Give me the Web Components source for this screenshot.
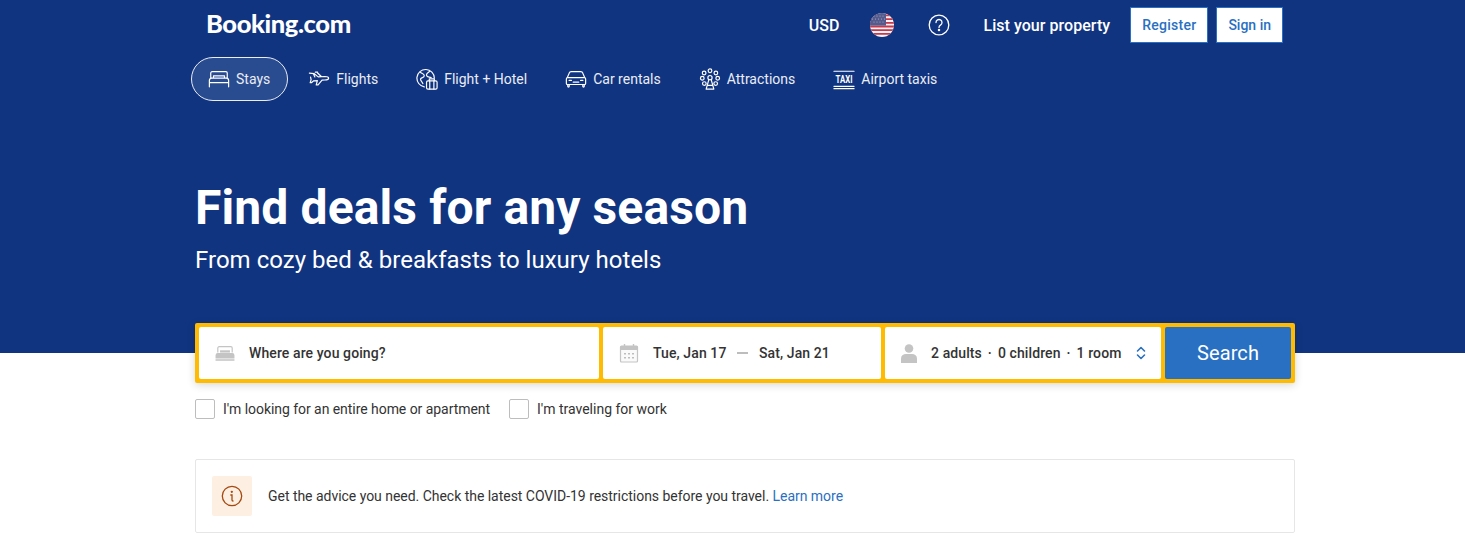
<!DOCTYPE html>
<html lang="en">
<head>
<meta charset="utf-8">
<title>Booking.com</title>
<style>
    html, body { margin: 0; background: #fff; }
    body { font-family: Roboto, "Liberation Sans", sans-serif; color: #333; overflow: hidden; }
    main { display: block; padding-left: 195px; }
</style>
</head>
<body>
<bk-hero>
    <bk-topbar></bk-topbar>
    <bk-tabs>
        <bk-tab icon="bed" active>Stays</bk-tab>
        <bk-tab icon="plane">Flights</bk-tab>
        <bk-tab icon="combo">Flight + Hotel</bk-tab>
        <bk-tab icon="car">Car rentals</bk-tab>
        <bk-tab icon="wheel">Attractions</bk-tab>
        <bk-tab icon="taxi">Airport taxis</bk-tab>
    </bk-tabs>
    <h1 slot="title">Find deals for any season</h1>
    <span slot="subtitle">From cozy bed &amp; breakfasts to luxury hotels</span>
</bk-hero>
<main>
    <bk-search></bk-search>
    <bk-options>
        <bk-check style="letter-spacing:-.05px">I'm looking for an entire home or apartment</bk-check>
        <bk-check>I'm traveling for work</bk-check>
    </bk-options>
    <bk-notice>Get the advice you need. Check the latest COVID-19 restrictions before you travel. <a slot="link">Learn more</a></bk-notice>
</main>

<script>
const ICONS = {
    bed: `<path d="M3 11V5.500A1.500 1.500 0 0 1 4.500 4h15A1.500 1.500 0 0 1 21 5.500V11M1.500 19v-5.500A2.500 2.500 0 0 1 4 11h16a2.500 2.500 0 0 1 2.500 2.500V19M1.500 16h21M1.500 19v1.500M22.500 19v1.500M6 11V8.500h12V11"/>`,
    plane: `<path d="M1.500 5.500l5 .6 4.600 3.600 7.400-.4c2.200 0 4 .8 4 1.800s-1.800 1.900-4 2l-3.200.2-4.300 5.200H9l1.200-4.700-4 .2-2.500 2H2.400l1-3.400-.6-2.600M7.500 9.700l-1.700-3.600M10.500 5.500l4 3.800M8 4.500h2.500"/>`,
    combo: `<path d="M9 20.500a9.500 9.500 0 1 1 11-9.500M5 5c2 1.500 4 1 4 3.500S5.500 10 5 12s2 3 2.500 5M15 3c-1 2.500-4 2.500-3.500 5s3 1.500 5 2.500"/><rect x="11.500" y="14" width="11.500" height="9" rx="1.500"/><path d="M14.500 14v-2.200h5.500V14M15 14v9M19.500 14v9"/>`,
    car: `<path d="M2.500 10.500l2-4.800A2.500 2.500 0 0 1 6.800 4h10.400a2.500 2.500 0 0 1 2.300 1.700l2 4.800M2.500 10.500h19a1.500 1.500 0 0 1 1 1.400v5.100a1 1 0 0 1-1 1h-19a1 1 0 0 1-1-1v-5.100a1.500 1.500 0 0 1 1-1.400zM3 18v2a.8.8 0 0 0 1.600 0v-2M19.400 18v2a.8.8 0 0 0 1.600 0v-2M4.500 13.500H7M17 13.500h2.500M9 15.500h6"/>`,
    wheel: `<circle cx="12" cy="3" r="2"/><circle cx="5.600" cy="5.400" r="2"/><circle cx="18.400" cy="5.400" r="2"/><circle cx="3.600" cy="11.200" r="2"/><circle cx="20.400" cy="11.200" r="2"/><circle cx="5.800" cy="17" r="2"/><circle cx="18.200" cy="17" r="2"/><circle cx="12" cy="10.500" r="2.300"/><path d="M10.800 12.500L7.800 23h8.400l-3-10.500M9.500 19h5"/>`,
    taxi: `<path d="M1 3.500h22M1 20h22M1 22.500h22" stroke-width="1.200"/><text transform="translate(12 16.800) scale(.95 1.300)" text-anchor="middle" font-family="Roboto, sans-serif" font-size="9" font-weight="700" fill="#fff" stroke="none">TAXI</text>`,
};

customElements.define('bk-hero', class extends HTMLElement {
    constructor() {
        super();
        this.attachShadow({ mode: 'open' }).innerHTML = `
            <style>
                :host { display: block; background: #113480; color: #fff; height: 353px; padding-left: 195px; }
                .wrap { width: 1100px; }
                .text { padding-top: 77px; }
                ::slotted(h1) { margin: 0; font-size: 48px; line-height: 60px; font-weight: 700; color: #fff; letter-spacing: .12px; }
                .sub { font-size: 24px; line-height: 32px; margin-top: 6px; display: block; letter-spacing: .02px; }
            </style>
            <div class="wrap">
                <slot name="top"></slot>
                <slot></slot>
                <div class="text">
                    <slot name="title"></slot>
                    <span class="sub"><slot name="subtitle"></slot></span>
                </div>
            </div>
        `;
    }
});

customElements.define('bk-topbar', class extends HTMLElement {
    constructor() {
        super();
        this.attachShadow({ mode: 'open' }).innerHTML = `
            <style>
                :host { display: flex; align-items: center; height: 50px; padding: 0 12px; color: #fff; }
                .logo { font-family: Lato, Roboto, sans-serif; font-weight: 900; font-size: 25.500px; line-height: 50px; letter-spacing: -0.4px; position: relative; top: -2px; margin-left: -1px; flex: none; }
                .right { margin-left: auto; display: flex; align-items: center; font-size: 16px; font-weight: 500; }
                .usd { margin-right: 31px; }
                .flag { display: block; margin-right: 34px; }
                .help { display: block; margin-right: 33px; }
                .list { margin-right: 20px; letter-spacing: .05px; }
                .btn { box-sizing: border-box; height: 36px; background: #fff; border: 1px solid #2a70c2; color: #2a70c2; font-size: 14px; font-weight: 500; display: flex; align-items: center; padding: 0 11px; }
                .btn.wide { letter-spacing: .25px; }
                .btn + .btn { margin-left: 8px; }
            </style>
            <span class="logo">Booking.com</span>
            <div class="right">
                <span class="usd">USD</span>
                <svg class="flag" width="24" height="24" viewBox="0 0 24 24">
                    <defs><clipPath id="c"><circle cx="12" cy="12" r="12"/></clipPath></defs>
                    <g clip-path="url(#c)">
                        <rect width="24" height="24" fill="#f4f4f6"/>
                        <path d="M0 1.500h24v1.800H0zM0 5.200h24V7H0zM0 8.900h24v1.800H0zM0 12.600h24v1.800H0zM0 16.300h24v1.800H0zM0 20h24v1.800H0z" fill="#c8374a"/>
                        <rect width="16" height="12.600" fill="#555b8c"/>
                        <g fill="#aab0cf">
                            <circle cx="4" cy="3" r=".6"/><circle cx="7" cy="3" r=".6"/><circle cx="10" cy="3" r=".6"/><circle cx="13" cy="3" r=".6"/>
                            <circle cx="2.500" cy="6" r=".6"/><circle cx="5.500" cy="6" r=".6"/><circle cx="8.500" cy="6" r=".6"/><circle cx="11.500" cy="6" r=".6"/><circle cx="14.500" cy="6" r=".6"/>
                            <circle cx="4" cy="9" r=".6"/><circle cx="7" cy="9" r=".6"/><circle cx="10" cy="9" r=".6"/><circle cx="13" cy="9" r=".6"/>
                        </g>
                    </g>
                </svg>
                <svg class="help" width="22" height="22" viewBox="0 0 22 22" fill="none" stroke="#fff" stroke-width="1.300">
                    <circle cx="11" cy="11" r="9.800"/>
                    <path d="M8 8.500a3 3 0 1 1 4.500 2.600c-1 .6-1.500 1.100-1.500 2.300" stroke-linecap="round"/>
                    <circle cx="11" cy="16" r=".6" fill="#fff"/>
                </svg>
                <span class="list">List your property</span>
                <span class="btn wide">Register</span>
                <span class="btn">Sign in</span>
            </div>
        `;
    }
    connectedCallback() {
        this.slot = 'top';
    }
});

customElements.define('bk-tabs', class extends HTMLElement {
    constructor() {
        super();
        this.attachShadow({ mode: 'open' }).innerHTML = `
            <style>
                :host { display: flex; gap: 3px; margin: 7px 0 0 -4px; height: 44px; }
            </style>
            <slot></slot>
        `;
    }
});

customElements.define('bk-tab', class extends HTMLElement {
    constructor() {
        super();
        this.attachShadow({ mode: 'open' }).innerHTML = `
            <style>
                :host { display: flex; box-sizing: border-box; align-items: center; gap: 6px; height: 44px; padding: 0 17px 0 16px; border: 1px solid transparent; border-radius: 22px; font-size: 14px; color: #e9edf5; }
                :host([active]) { background: #294b8f; border-color: #e9edf5; }
                svg { display: block; flex: none; fill: none; stroke: #fff; stroke-width: 1.300; stroke-linecap: round; stroke-linejoin: round; }
            </style>
            <svg width="22" height="22" viewBox="0 0 24 24"></svg>
            <slot></slot>
        `;
    }
    connectedCallback() {
        this.shadowRoot.querySelector('svg').innerHTML = ICONS[this.getAttribute('icon')] || '';
    }
});

customElements.define('bk-field', class extends HTMLElement {
    constructor() {
        super();
        this.attachShadow({ mode: 'open' }).innerHTML = `
            <style>
                :host { display: flex; box-sizing: border-box; align-items: center; height: 52px; background: #fff; border-radius: 2px; padding: 0 15px 0 16px; font-size: 14px; font-weight: 500; color: #333; letter-spacing: .1px; }
            </style>
            <slot></slot>
        `;
    }
});

customElements.define('bk-search', class extends HTMLElement {
    constructor() {
        super();
        this.attachShadow({ mode: 'open' }).innerHTML = `
            <style>
                :host { display: block; box-sizing: border-box; width: 1100px; height: 60px; margin-top: -30px; background: #febb02; border-radius: 2px; padding: 4px; box-shadow: 0 2px 8px rgba(0,0,0,.16); }
                .row { display: grid; grid-template-columns: 400px 278px 276px 126px; gap: 4px; }
                .dash { display: block; width: 11px; height: 1.500px; background: #bdbdbd; margin: 0 10.500px 0 11px; }
                .go { height: 52px; background: #2a70c2; color: #fff; border-radius: 2px; display: flex; align-items: center; justify-content: center; font-size: 20px; letter-spacing: .1px; }
                .dot { width: 16px; text-align: center; }
                svg { display: block; flex: none; margin-right: 14px; }
                .updown { margin: 0 0 0 auto; }
            </style>
            <div class="row">
                <bk-field>
                    <svg width="20" height="18" viewBox="0 0 22 20">
                        <path d="M3 9.500V4.500A1.500 1.500 0 0 1 4.500 3h13A1.500 1.500 0 0 1 19 4.500v5" fill="none" stroke="#c4c4c4" stroke-width="1.300"/>
                        <path d="M5.500 9.500V7h11v2.500z" fill="#c4c4c4"/>
                        <path d="M3 10h16a2.500 2.500 0 0 1 2.500 2.500V16H.500v-3.500A2.500 2.500 0 0 1 3 10zM.500 17h21v1.500h-21z" fill="#c4c4c4"/>
                    </svg>
                    <span>Where are you going?</span>
                </bk-field>
                <bk-field>
                    <svg width="20" height="20" viewBox="0 0 20 20">
                        <rect x="1.500" y="3" width="17" height="16" rx="1" fill="#fafafa" stroke="#c4c4c4" stroke-width="1.200"/>
                        <path d="M1.500 3h17v4h-17z" fill="#c4c4c4"/>
                        <path d="M5.500 1v3M14.500 1v3" stroke="#c4c4c4" stroke-width="1.400"/>
                        <path d="M5 10h2v1.500H5zM9 10h2v1.500H9zM13 10h2v1.500h-2zM5 14h2v1.500H5zM9 14h2v1.500H9zM13 14h2v1.500h-2z" fill="#bdbdbd"/>
                    </svg>
                    <span>Tue, Jan 17</span><i class="dash"></i><span>Sat, Jan 21</span>
                </bk-field>
                <bk-field>
                    <svg width="16" height="19" viewBox="0 0 16 19">
                        <circle cx="8" cy="4.500" r="4.300" fill="#c4c4c4"/>
                        <path d="M0 19v-4.500c0-3 2.200-4.500 5-4.500h6c2.800 0 5 1.500 5 4.500V19z" fill="#c4c4c4"/>
                    </svg>
                    <span>2 adults</span><span class="dot">·</span><span>0 children</span><span class="dot">·</span><span>1 room</span>
                    <svg class="updown" width="10" height="14" viewBox="0 0 10 14" fill="none" stroke="#2a70c2" stroke-width="1.600" stroke-linecap="round" stroke-linejoin="round">
                        <path d="M1.500 5L5 1.500 8.500 5M1.500 9L5 12.500 8.500 9"/>
                    </svg>
                </bk-field>
                <div class="go">Search</div>
            </div>
        `;
    }
});

customElements.define('bk-options', class extends HTMLElement {
    constructor() {
        super();
        this.attachShadow({ mode: 'open' }).innerHTML = `
            <style>
                :host { display: flex; gap: 19px; width: 1100px; margin-top: 16px; }
            </style>
            <slot></slot>
        `;
    }
});

customElements.define('bk-check', class extends HTMLElement {
    constructor() {
        super();
        this.attachShadow({ mode: 'open' }).innerHTML = `
            <style>
                :host { display: flex; align-items: center; gap: 8px; height: 20px; font-size: 14px; color: #333; }
                .box { box-sizing: border-box; width: 20px; height: 20px; background: #fff; border: 1px solid #bdbdbd; border-radius: 2px; flex: none; }
            </style>
            <span class="box"></span>
            <slot></slot>
        `;
    }
});

customElements.define('bk-notice', class extends HTMLElement {
    constructor() {
        super();
        this.attachShadow({ mode: 'open' }).innerHTML = `
            <style>
                :host { display: flex; box-sizing: border-box; align-items: center; gap: 16px; width: 1100px; height: 74px; margin-top: 40px; padding: 0 16px; background: #fff; border: 1px solid #e6e6e6; border-radius: 2px; font-size: 14px; color: #333; letter-spacing: -.03px; }
                .icon { width: 40px; height: 40px; background: #fdf0e3; border-radius: 2px; display: flex; align-items: center; justify-content: center; flex: none; }
                ::slotted(a) { color: #2a70c2; }
            </style>
            <span class="icon">
                <svg width="22" height="22" viewBox="0 0 22 22" fill="none" stroke="#a5480f" stroke-width="1.300" stroke-linecap="round">
                    <circle cx="11" cy="11" r="9.700"/>
                    <path d="M9.800 10h1.200v5c0 .6.400 1 1 1"/>
                    <circle cx="10.800" cy="6.800" r=".5" fill="#a5480f"/>
                </svg>
            </span>
            <span><slot></slot><slot name="link"></slot></span>
        `;
    }
});
</script>
</body>
</html>
